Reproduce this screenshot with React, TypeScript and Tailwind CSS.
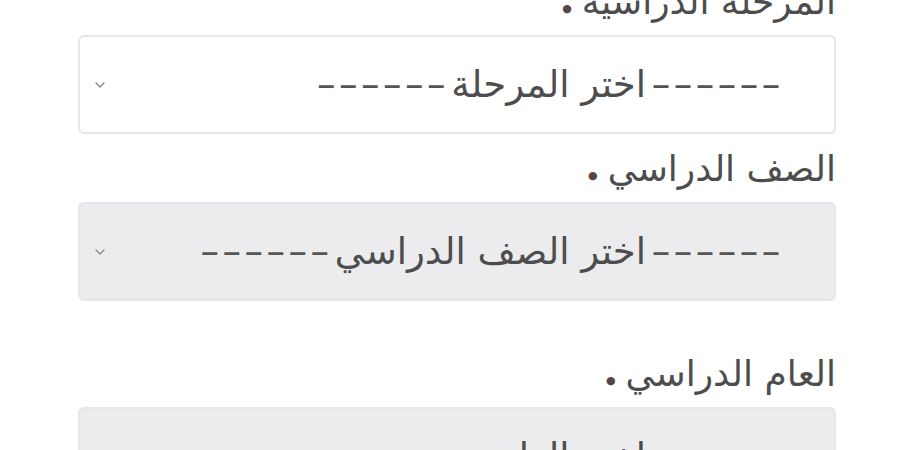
import { ChevronDown } from "lucide-react";

const fields = [
  { label: "المرحلة الدراسية", placeholder: "اختر المرحلة", disabled: false, gap: "mb-[11px]" },
  { label: "الصف الدراسي", placeholder: "اختر الصف الدراسي", disabled: true, gap: "mb-[49px]" },
  { label: "العام الدراسي", placeholder: "اختر العام", disabled: true, gap: "" },
];

const Dashes = () => (
  <span className="mx-[4px] inline-flex text-[#555]">
    {[0, 1, 2, 3, 4, 5].map((i) => (
      <span key={i} className="inline-block w-[22px] text-center">
        –
      </span>
    ))}
  </span>
);

const App = () => {
  return (
    <div dir="rtl" className="h-[450px] w-[900px] overflow-hidden bg-white" style={{ fontFamily: '"DejaVu Sans", sans-serif' }}>
      <div className="-mt-[22px] pr-[64px] pl-[78px]">
        {fields.map((f) => (
          <div key={f.label} className={f.gap}>
            <label className="mb-[2px] block text-[36px] leading-[48px] text-[#4d4d4d]">
              {f.label}
              <span className="mr-[10px] align-[2px] text-[11px] text-[#5a4448]">●</span>
            </label>
            <div
              className={`flex h-[99px] items-center justify-between rounded-[6px] border-2 border-[#e4e6e9] pr-[48px] pl-[12px] ${
                f.disabled ? "bg-[#ececee]" : "bg-white"
              }`}
            >
              <span className="text-[37px] text-[#4d4d4d]">
                <Dashes />
                {f.placeholder}
                <Dashes />
              </span>
              <ChevronDown className="h-[16px] w-[16px] text-[#888]" strokeWidth={2} />
            </div>
          </div>
        ))}
      </div>
    </div>
  );
};

export default App;
